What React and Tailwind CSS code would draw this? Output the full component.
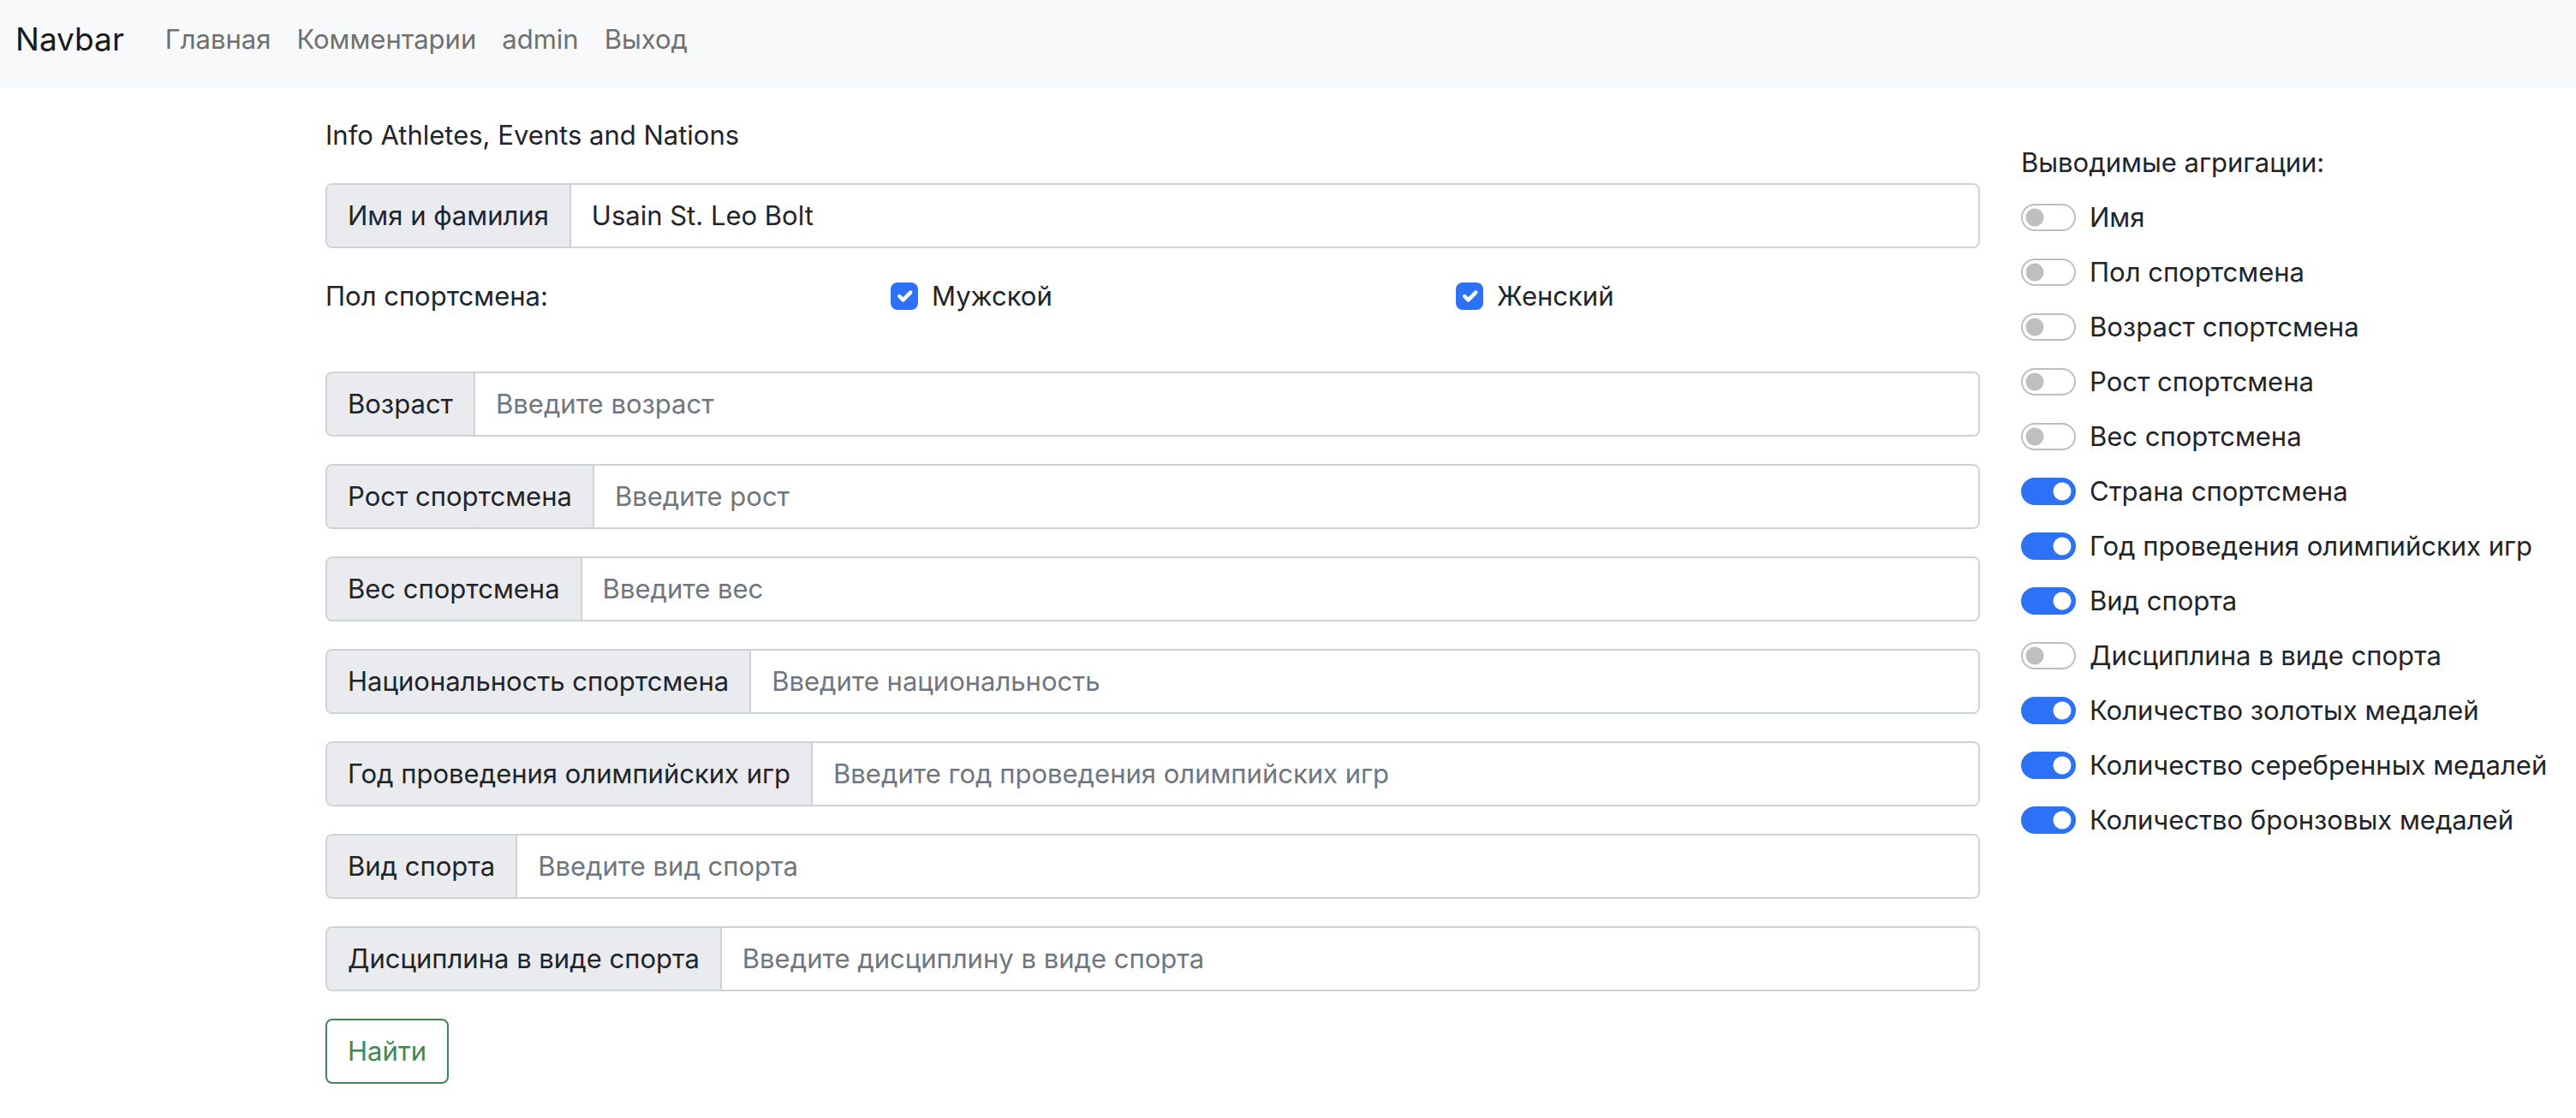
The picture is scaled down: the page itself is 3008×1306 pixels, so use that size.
import { useState } from "react";

const navLinks = ["Главная", "Комментарии", "admin", "Выход"];

const filters = [
  { id: "age", label: "Возраст", placeholder: "Введите возраст" },
  { id: "height", label: "Рост спортсмена", placeholder: "Введите рост" },
  { id: "weight", label: "Вес спортсмена", placeholder: "Введите вес" },
  { id: "nation", label: "Национальность спортсмена", placeholder: "Введите национальность" },
  { id: "year", label: "Год проведения олимпийских игр", placeholder: "Введите год проведения олимпийских игр" },
  { id: "sport", label: "Вид спорта", placeholder: "Введите вид спорта" },
  { id: "event", label: "Дисциплина в виде спорта", placeholder: "Введите дисциплину в виде спорта" },
];

const aggregations = [
  ["Имя", false],
  ["Пол спортсмена", false],
  ["Возраст спортсмена", false],
  ["Рост спортсмена", false],
  ["Вес спортсмена", false],
  ["Страна спортсмена", true],
  ["Год проведения олимпийских игр", true],
  ["Вид спорта", true],
  ["Дисциплина в виде спорта", false],
  ["Количество золотых медалей", true],
  ["Количество серебренных медалей", true],
  ["Количество бронзовых медалей", true],
];

function TextField({ id, label, placeholder, defaultValue }) {
  return (
    <div className="flex rounded-lg border-2 border-[#ced3d8]">
      <label htmlFor={id} className="shrink-0 rounded-l-md border-r-2 border-[#ced3d8] bg-[#eaebef] px-6 py-3 whitespace-nowrap">
        {label}
      </label>
      <input
        id={id}
        type="text"
        placeholder={placeholder}
        defaultValue={defaultValue}
        className="min-w-0 flex-1 rounded-r-md bg-white px-6 py-3 outline-none placeholder:text-[#6f767e]"
      />
    </div>
  );
}

function CheckBox({ id, label }) {
  const [checked, setChecked] = useState(true);
  return (
    <div className="flex items-start gap-4">
      <span className="mt-2 grid size-8">
        <input
          id={id}
          type="checkbox"
          checked={checked}
          onChange={(e) => setChecked(e.target.checked)}
          className="col-start-1 row-start-1 size-8 appearance-none rounded-lg border-2 border-[#bfbfbf] checked:border-[#2c71f6] checked:bg-[#2c71f6]"
        />
        {checked && (
          <svg viewBox="-1 -1 22 22" className="pointer-events-none col-start-1 row-start-1 size-8" aria-hidden="true">
            <path d="M6 10l3 3l6-6" fill="none" stroke="#fff" strokeWidth="3" strokeLinecap="round" strokeLinejoin="round" />
          </svg>
        )}
      </span>
      <label htmlFor={id}>{label}</label>
    </div>
  );
}

function Switch({ id, label, initial }) {
  const [on, setOn] = useState(initial);
  return (
    <div className="flex items-start gap-4">
      <span className="mt-2 grid h-8 w-16 shrink-0">
        <input
          id={id}
          type="checkbox"
          role="switch"
          checked={on}
          onChange={(e) => setOn(e.target.checked)}
          className="col-start-1 row-start-1 h-8 w-16 appearance-none rounded-full border-2 border-[#bfbfbf] bg-white checked:border-[#2c71f6] checked:bg-[#2c71f6]"
        />
        <svg viewBox="0 0 64 32" className="pointer-events-none col-start-1 row-start-1 h-8 w-16" aria-hidden="true">
          <circle cx={on ? 48 : 16} cy="16" r="10.5" fill={on ? "#fff" : "#bfbfbf"} />
        </svg>
      </span>
      <label htmlFor={id} className="whitespace-nowrap">{label}</label>
    </div>
  );
}

export default function App() {
  return (
    <div className="bg-white font-['Inter','Liberation_Sans',sans-serif] text-[31px] leading-[48px] text-[#212429]">
      <nav className="flex items-center bg-[#f8f9fb] px-[18px] pt-4 pb-[26px]">
        <a href="#" className="mr-12 text-[37px] leading-[60px] text-[#17181a]">Navbar</a>
        <div className="flex gap-[30px]">
          {navLinks.map((text) => (
            <a key={text} href="#" className="text-[#707071]">{text}</a>
          ))}
        </div>
      </nav>

      <main className="grid grid-cols-[minmax(0,3fr)_minmax(0,1fr)] pt-8 pr-3 pl-[356px]">
        <form className="flex flex-col gap-8 px-6" onSubmit={(e) => e.preventDefault()}>
          <p>Info Athletes, Events and Nations</p>
          <TextField id="name" label="Имя и фамилия" defaultValue="Usain St. Leo Bolt" />
          <div className="-mr-12 mb-8 grid grid-cols-3">
            <span>Пол спортсмена:</span>
            <CheckBox id="male" label="Мужской" />
            <CheckBox id="female" label="Женский" />
          </div>
          {filters.map((f) => (
            <TextField key={f.id} {...f} />
          ))}
          <button type="submit" className="self-start rounded-lg border-2 border-[#418656] px-6 py-3 text-[#418656]">
            Найти
          </button>
        </form>

        <aside className="flex flex-col gap-4 px-6 pt-8">
          <p>Выводимые агригации:</p>
          {aggregations.map(([label, initial], i) => (
            <Switch key={label} id={`aggregation-${i}`} label={label} initial={initial} />
          ))}
        </aside>
      </main>
    </div>
  );
}
